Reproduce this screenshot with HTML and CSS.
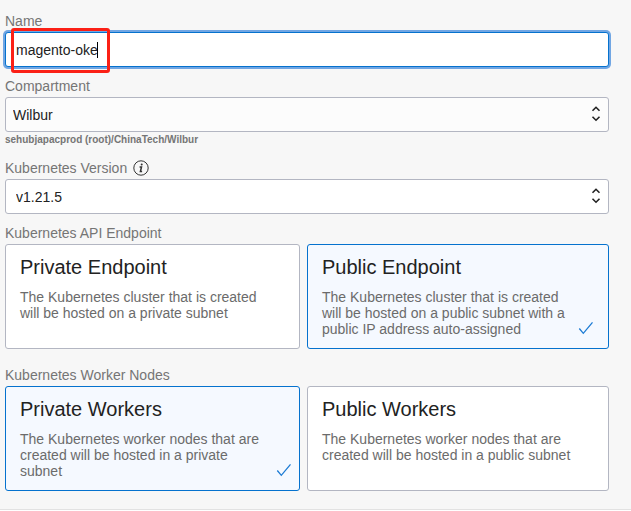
FILE: index.html
```html
<!DOCTYPE html>
<html lang="en">
<head>
<meta charset="utf-8">
<title>Create Cluster</title>
<link rel="stylesheet" href="styles.css">
</head>
<body>
<form class="panel">
  <div class="field">
    <label class="caption" for="name">Name</label>
    <div class="control">
      <input class="box box-focused" id="name" type="text" value="magento-oke">
      <span class="caret"></span>
      <span class="highlight"></span>
    </div>
  </div>
  <div class="field">
    <label class="caption" for="compartment">Compartment</label>
    <div class="control">
      <select class="box box-tinted" id="compartment"><option>Wilbur</option></select>
      <svg class="chevrons" viewBox="0 0 10 16"><path d="M1.5 4.8 5 1.3 8.5 4.8M1.5 10.7 5 14.2 8.5 10.7"/></svg>
    </div>
    <p class="hint">sehubjapacprod (root)/ChinaTech/Wilbur</p>
  </div>
  <div class="field">
    <div class="caption-row">
      <label class="caption" for="version">Kubernetes Version</label>
      <svg class="info" viewBox="0 0 16 16"><circle cx="8" cy="8" r="7.2"/><path class="stem" d="M6.6 6.9H8.5L7.4 11.5H9.1"/><circle class="dot" cx="8.7" cy="4.5" r="1"/></svg>
    </div>
    <div class="control">
      <select class="box box-indented" id="version"><option>v1.21.5</option></select>
      <svg class="chevrons" viewBox="0 0 10 16"><path d="M1.5 4.8 5 1.3 8.5 4.8M1.5 10.7 5 14.2 8.5 10.7"/></svg>
    </div>
  </div>
  <fieldset class="field group">
    <legend class="caption">Kubernetes API Endpoint</legend>
    <div class="cards">
      <label class="card">
        <input class="choice" type="radio" name="endpoint">
        <span class="title">Private Endpoint</span>
        <span class="text">The Kubernetes cluster that is created will be hosted on a private subnet</span>
      </label>
      <label class="card card-selected">
        <input class="choice" type="radio" name="endpoint" checked>
        <span class="title">Public Endpoint</span>
        <span class="text">The Kubernetes cluster that is created will be hosted on a public subnet with a public IP address auto-assigned</span>
        <svg class="check" viewBox="0 0 16 14"><path d="M1.3 7.5 5.3 12.3 14.5 1.3"/></svg>
      </label>
    </div>
  </fieldset>
  <fieldset class="field group group-last">
    <legend class="caption">Kubernetes Worker Nodes</legend>
    <div class="cards">
      <label class="card card-selected">
        <input class="choice" type="radio" name="workers" checked>
        <span class="title">Private Workers</span>
        <span class="text">The Kubernetes worker nodes that are created will be hosted in a private subnet</span>
        <svg class="check" viewBox="0 0 16 14"><path d="M1.3 7.5 5.3 12.3 14.5 1.3"/></svg>
      </label>
      <label class="card">
        <input class="choice" type="radio" name="workers">
        <span class="title">Public Workers</span>
        <span class="text">The Kubernetes worker nodes that are created will be hosted in a public subnet</span>
      </label>
    </div>
  </fieldset>
</form>
</body>
</html>
```
FILE: styles.css
```css
* {
  box-sizing: border-box;
}

body {
  margin: 0;
  background: #fff;
  color: #222;
  font: 14px/16px "Liberation Sans", Arial, sans-serif;
}

.panel {
  padding: 13px 22px 18px 5px;
  background: #f7f7f7;
  border-bottom: 1px solid #e2e2e2;
}

.field {
  margin: 0 0 11px;
}

.caption {
  display: block;
  padding: 0;
  color: #757575;
}

.caption-row {
  display: flex;
  align-items: center;
  gap: 6px;
  height: 16px;
}

.control {
  position: relative;
  margin-top: 3px;
}

.box {
  display: block;
  width: 100%;
  height: 35px;
  margin: 0;
  padding: 0 10px;
  appearance: none;
  background: #fff;
  border: 1px solid #b3b6c2;
  border-radius: 3px;
  color: #222;
  font: inherit;
  outline: 0;
}

.box-focused {
  border-color: #0572ce;
  box-shadow: 0 0 0 2px #71a6e3;
}

.box-tinted {
  padding-left: 7px;
  background: #fcfcfc;
}

.box-indented {
  padding-left: 10px;
}

.caret {
  position: absolute;
  left: 92px;
  top: 10px;
  width: 1px;
  height: 16px;
  background: #000;
}

.highlight {
  position: absolute;
  left: 6px;
  top: -4px;
  width: 99px;
  height: 45px;
  border: 3px solid #fb2016;
  border-radius: 3px;
  pointer-events: none;
}

.chevrons {
  position: absolute;
  right: 8px;
  top: 9px;
  width: 10px;
  height: 16px;
  fill: none;
  stroke: #222;
  stroke-width: 1.6;
  pointer-events: none;
}

.hint {
  margin: 2px 0 14px;
  color: #757575;
  font-size: 10px;
  font-weight: bold;
  line-height: 12px;
}

.info {
  width: 16px;
  height: 16px;
  fill: none;
  stroke: #333;
  stroke-width: 1;
}

.info .stem {
  stroke-width: 1.5;
}

.info .dot {
  fill: #333;
  stroke: none;
}

.group {
  min-width: 0;
  margin-bottom: 18px;
  padding: 0;
  border: 0;
}

.group-last {
  margin-bottom: 0;
}

.cards {
  display: grid;
  grid-template-columns: 295fr 302fr;
  gap: 7px;
  margin-top: 3px;
}

.card {
  position: relative;
  display: flex;
  flex-direction: column;
  gap: 10px;
  padding: 10px 30px 11px 14px;
  background: #fff;
  border: 1px solid #b3b6c2;
  border-radius: 3px;
}

.card-selected {
  background: #f5f9ff;
  border-color: #0572ce;
}

.choice {
  position: absolute;
  opacity: 0;
}

.title {
  font-size: 20px;
  line-height: 24px;
}

.text {
  color: #6b6b6b;
}

.check {
  position: absolute;
  left: 270px;
  bottom: 13px;
  width: 16px;
  height: 14px;
  fill: none;
  stroke: #1c7bd4;
  stroke-width: 1.3;
}
```
